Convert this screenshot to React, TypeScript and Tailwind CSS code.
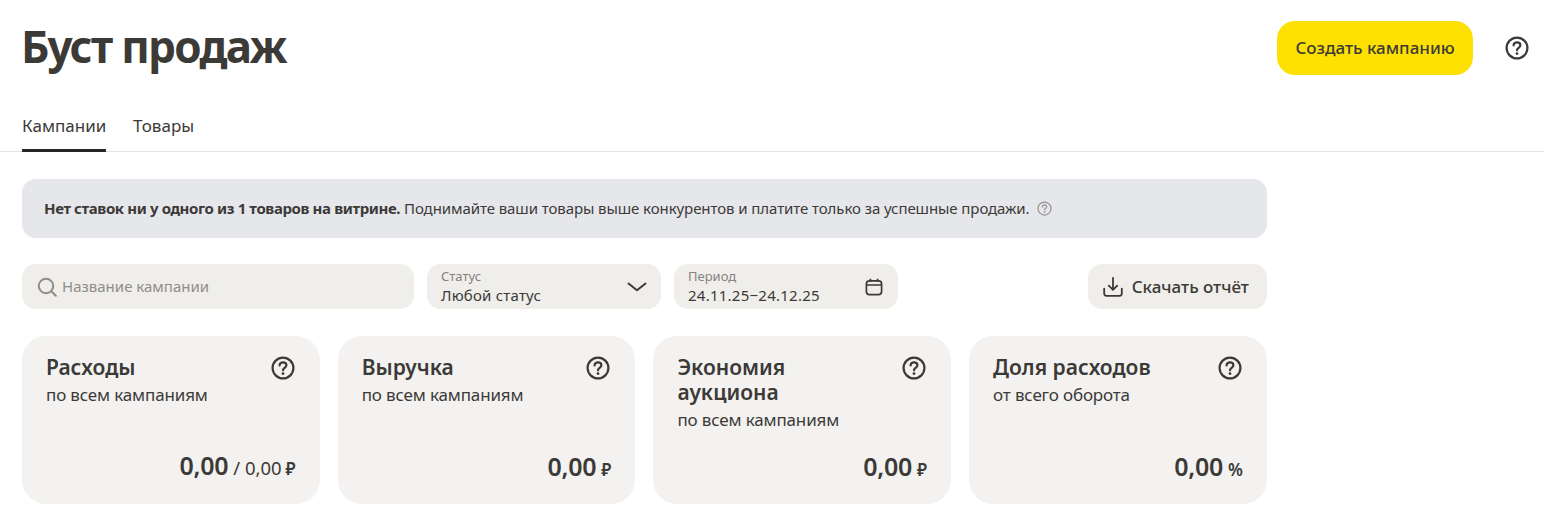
const cards = [
  { title: 'Расходы', sub: 'по всем кампаниям', value: '0,00', extra: '/ 0,00', unit: '₽' },
  { title: 'Выручка', sub: 'по всем кампаниям', value: '0,00', unit: '₽' },
  { title: 'Экономия аукциона', sub: 'по всем кампаниям', value: '0,00', unit: '₽' },
  { title: 'Доля расходов', sub: 'от всего оборота', value: '0,00', unit: '%' },
]

function HelpIcon({ className }: { className: string }) {
  return (
    <svg viewBox="0 0 24 24" fill="none" className={className}>
      <circle cx="12" cy="12" r="10.4" stroke="currentColor" strokeWidth="2.2" />
      <path
        d="M8.6 9.4c0-1.9 1.5-3.1 3.4-3.1s3.4 1.2 3.4 3c0 2.6-3.4 2.6-3.4 5"
        stroke="currentColor"
        strokeWidth="2.2"
        strokeLinecap="round"
      />
      <circle cx="12" cy="17.6" r="1.4" fill="currentColor" />
    </svg>
  )
}

function SearchIcon() {
  return (
    <svg viewBox="0 0 20 20" fill="none" className="w-5 h-5" stroke="#8f8d88" strokeWidth="2" strokeLinecap="round">
      <circle cx="9" cy="9" r="7.2" />
      <path d="M14.4 14.4l4.4 4.4" />
    </svg>
  )
}

function ChevronIcon() {
  return (
    <svg viewBox="0 0 20 10" fill="none" className="w-5 h-[10px]" stroke="currentColor" strokeWidth="2" strokeLinecap="round" strokeLinejoin="round">
      <path d="M1.5 1.5L10 8.3l8.5-6.8" />
    </svg>
  )
}

function CalendarIcon() {
  return (
    <svg viewBox="0 0 18 18" fill="none" className="w-[18px] h-[18px]" stroke="currentColor" strokeWidth="1.7">
      <rect x="1.4" y="2.8" width="15.2" height="13.8" rx="3.2" />
      <path d="M1.6 7h14.8M5.4 .8v3M12.6 .8v3" />
    </svg>
  )
}

function DownloadIcon() {
  return (
    <svg viewBox="0 0 20 20" fill="none" className="w-5 h-5" stroke="currentColor" strokeWidth="1.8" strokeLinecap="round" strokeLinejoin="round">
      <path d="M10 1v11.6M5.8 8.6l4.2 4.2 4.2-4.2" />
      <path d="M1.2 11.6v5c0 1.3.9 2.2 2.2 2.2h13.2c1.3 0 2.2-.9 2.2-2.2v-5" />
    </svg>
  )
}

export default function App() {
  return (
    <div className="min-h-[521px] bg-white pr-5 text-[#3c3a37] font-['Noto_Sans',sans-serif]">
      <div className="flex items-center justify-between pl-[21px] pr-[15px] pt-[21px]">
        <h1 className="text-[44px] leading-[50px] pb-1 font-bold tracking-[-1.7px]">Буст продаж</h1>
        <div className="flex items-center gap-[32px]">
          <button className="w-[196px] h-[54px] rounded-[18px] bg-[#fee100] text-[17px] font-medium">
            Создать кампанию
          </button>
          <HelpIcon className="w-6 h-6 text-[#3c3a37]" />
        </div>
      </div>

      <div className="flex gap-[27px] pl-[22px] mt-[25px] border-b border-[#e3e3e3] h-[52px] text-[17px]">
        <div className="h-[52px] w-[84px] pt-[13px] border-b-[3px] border-[#262626] whitespace-nowrap">Кампании</div>
        <div className="pt-[13px]">Товары</div>
      </div>

      <div className="ml-[22px] w-[1244.8px]">
        <div className="mt-[27px] h-[59px] rounded-[14px] bg-[#e6e7eb] px-[22px] flex items-center gap-[7px] text-[15px] tracking-[-0.08px]">
          <p>
            <span className="font-bold tracking-[-0.38px]">Нет ставок ни у одного из 1 товаров на витрине.</span> Поднимайте ваши товары выше конкурентов и платите только за успешные продажи.
          </p>
          <HelpIcon className="w-[15px] h-[15px] text-[#97948f] [&_*]:[stroke-width:2]" />
        </div>

        <div className="mt-[26px] flex h-[45px]">
          <div className="w-[392px] rounded-[14px] bg-[#efeeeb] flex items-center pl-[15px] gap-[5px] text-[15px] text-[#8f8d88]">
            <SearchIcon />
            Название кампании
          </div>
          <div className="ml-[13px] w-[234px] rounded-[14px] bg-[#efeeeb] flex items-center justify-between pl-[14px] pr-[14px]">
            <div>
              <div className="text-[13px] leading-[14px] mb-[2px] text-[#85837e]">Статус</div>
              <div className="text-[15px] leading-[20px] tracking-[0.2px]">Любой статус</div>
            </div>
            <ChevronIcon />
          </div>
          <div className="ml-[13px] w-[224px] rounded-[14px] bg-[#efeeeb] flex items-center justify-between pl-[14px] pr-[15px]">
            <div>
              <div className="text-[13px] leading-[14px] mb-[2px] text-[#85837e]">Период</div>
              <div className="text-[15px] leading-[20px] tracking-[0.25px]">24.11.25−24.12.25</div>
            </div>
            <CalendarIcon />
          </div>
          <button className="ml-auto w-[179px] rounded-[14px] bg-[#efeeeb] flex items-center justify-center gap-[9px] pr-[3px] text-[17px] font-medium">
            <DownloadIcon />
            Скачать отчёт
          </button>
        </div>

        <div className="mt-[27px] grid grid-cols-4 gap-[18px]">
          {cards.map((card) => (
            <div key={card.title} className="h-[168px] rounded-[24px] bg-[#f3f2f0] pl-6 pr-[25px] pt-[19px] pb-[22px] flex flex-col justify-between">
              <div>
                <div className="flex justify-between items-start gap-[30px]">
                  <h3 className="text-[21px] leading-[25px] font-semibold">{card.title}</h3>
                  <HelpIcon className="w-6 h-6 mt-px shrink-0" />
                </div>
                <div className="text-[17px] leading-[20px] mt-[5px] tracking-[-0.15px]">{card.sub}</div>
              </div>
              <div className="flex items-baseline justify-end gap-[5px] -mr-px">
                <span className="text-[25px] leading-[28px] font-semibold tracking-[-0.3px]">{card.value}</span>
                {card.extra && <span className="text-[18.5px] -mr-px">{card.extra}</span>}
                <span className="text-[17px] font-semibold">{card.unit}</span>
              </div>
            </div>
          ))}
        </div>
      </div>
    </div>
  )
}
